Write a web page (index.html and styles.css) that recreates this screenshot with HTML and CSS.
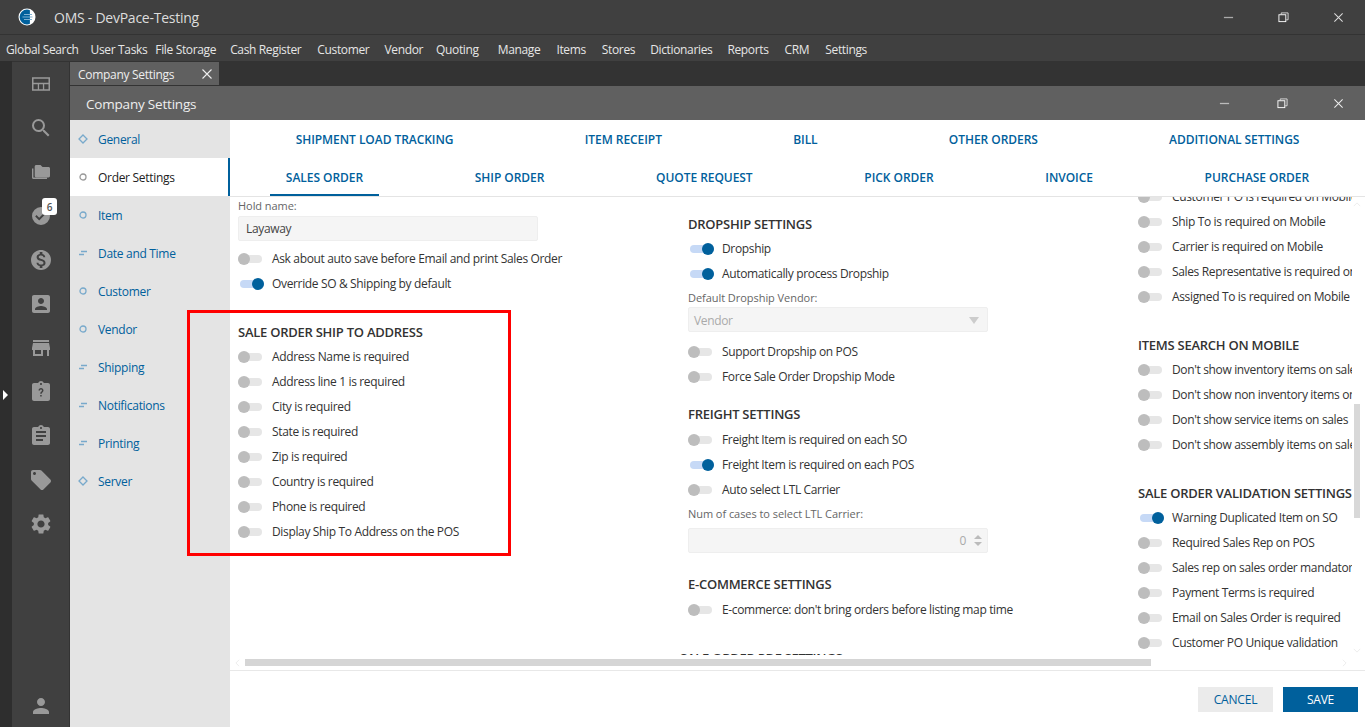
FILE: index.html
```html
<!DOCTYPE html>
<html lang="en">
<head>
<meta charset="utf-8">
<title>OMS - DevPace-Testing</title>
<link rel="stylesheet" href="styles.css">
</head>
<body>
<div class="app">
  <header class="titlebar">
    <svg class="logo" viewBox="0 0 18 18"><circle cx="9" cy="9" r="8.5" fill="#fff"/><path d="M9 1.6A7.4 7.4 0 0 0 9 16.4c1 0 2-.2 2.9-.6V2.2C11 1.8 10 1.6 9 1.6z" fill="#00609c"/><path d="M6 6.5h8M4.5 9h10M6 11.5h8" stroke="#7fb2d3" stroke-width="1.2"/></svg>
    <span class="apptitle">OMS - DevPace-Testing</span>
    <div class="winctl top">
      <svg viewBox="0 0 12 12"><path d="M1 6h10" stroke="#aaa" stroke-width="1.4"/></svg>
      <svg viewBox="0 0 12 12"><path d="M3.5 2.5V1h7.5v7.5H9" fill="none" stroke="#ddd"/><rect x="1" y="3" width="7.5" height="7.5" fill="none" stroke="#fff"/></svg>
      <svg viewBox="0 0 12 12"><path d="M1.5 1.5l9 9M10.5 1.5l-9 9" stroke="#ddd" stroke-width="1.1"/></svg>
    </div>
  </header>
  <nav class="menubar">
    <span>Global Search</span><span>User Tasks</span><span>File Storage</span><span>Cash Register</span><span>Customer</span><span>Vendor</span><span>Quoting</span><span>Manage</span><span>Items</span><span>Stores</span><span>Dictionaries</span><span>Reports</span><span>CRM</span><span>Settings</span>
  </nav>
  <div class="workspace">
    <div class="edge"><i class="edge-arrow"></i></div>
    <aside class="rail">
      <div class="rail-item"><svg viewBox="0 0 24 24"><path fill-rule="evenodd" d="M3 5.300h18v13.400H3zM4.500 6.800v4h15v-4zM4.500 12.300v4.900h4.300v-4.900zM10.100 12.300v4.900h3.800v-4.900zM15.200 12.300v4.900h4.300v-4.900z"/></svg></div>
      <div class="rail-item"><svg viewBox="0 0 24 24"><path d="M15.5 14h-.79l-.28-.27A6.47 6.47 0 0 0 16 9.5 6.5 6.5 0 1 0 9.5 16c1.61 0 3.09-.59 4.23-1.57l.27.28v.79l5 4.99L20.49 19l-4.99-5zm-6 0C7.01 14 5 11.99 5 9.5S7.01 5 9.5 5 14 7.01 14 9.5 11.99 14 9.5 14z"/></svg></div>
      <div class="rail-item"><svg viewBox="0 0 24 24"><path d="M19.500 7h-6l-2-2H7.300c-.9 0-1.600.7-1.600 1.600v9.200c0 .9.7 1.600 1.600 1.600h12.200c.9 0 1.500-.7 1.500-1.600V8.600c0-.9-.6-1.600-1.500-1.600z"/><path d="M3 8.500h1.400v9.100H18V19H4.500C3.700 19 3 18.300 3 17.500z"/></svg></div>
      <div class="rail-item"><svg viewBox="0 0 24 24"><path d="M12 3a9 9 0 1 0 0 18 9 9 0 0 0 0-18zm-1.800 13.400-4-4 1.300-1.300 2.700 2.700 6.300-6.300 1.300 1.300z"/></svg><span class="badge">6</span></div>
      <div class="rail-item"><svg viewBox="0 0 24 24"><path d="M12 2C6.48 2 2 6.48 2 12s4.48 10 10 10 10-4.48 10-10S17.52 2 12 2zm1.41 16.09V20h-2.67v-1.93c-1.71-.36-3.16-1.46-3.27-3.4h1.96c.1 1.05.82 1.87 2.65 1.87 1.96 0 2.4-.98 2.4-1.59 0-.83-.44-1.61-2.67-2.14-2.48-.6-4.18-1.62-4.18-3.67 0-1.72 1.39-2.84 3.11-3.21V4h2.67v1.95c1.86.45 2.79 1.86 2.85 3.39H14.3c-.05-1.11-.64-1.87-2.22-1.87-1.5 0-2.4.68-2.4 1.64 0 .84.65 1.39 2.67 1.91s4.18 1.39 4.18 3.91c-.01 1.83-1.38 2.83-3.12 3.16z"/></svg></div>
      <div class="rail-item"><svg viewBox="0 0 24 24"><path d="M3 5v14c0 1.100.89 2 2 2h14c1.100 0 2-.9 2-2V5c0-1.100-.9-2-2-2H5c-1.110 0-2 .9-2 2zm12 4c0 1.660-1.340 3-3 3s-3-1.340-3-3 1.340-3 3-3 3 1.340 3 3zm-9 8c0-2 4-3.100 6-3.100s6 1.100 6 3.100v1H6v-1z"/></svg></div>
      <div class="rail-item"><svg viewBox="0 0 24 24"><path d="M20 4H4v2h16V4zm1 10v-2l-1-5H4l-1 5v2h1v6h10v-6h4v6h2v-6h1zm-9 4H6v-4h6v4z"/></svg></div>
      <div class="rail-item"><svg viewBox="0 0 24 24"><path fill-rule="evenodd" d="M19 3h-4.180C14.400 1.840 13.300 1 12 1c-1.300 0-2.400.84-2.820 2H5c-1.100 0-2 .9-2 2v14c0 1.100.9 2 2 2h14c1.100 0 2-.9 2-2V5c0-1.100-.9-2-2-2zm-7 0c.55 0 1 .45 1 1s-.45 1-1 1-1-.45-1-1 .45-1 1-1z"/><path d="M9.500 10.500c0-1.400 1.100-2.500 2.500-2.500s2.500 1.100 2.500 2.400c0 1.800-1.800 1.800-1.800 3.300h-1.500c0-2.300 1.800-2.200 1.800-3.300 0-.5-.4-1-1-1s-1 .5-1 1.100zM11.200 15h1.500v1.600h-1.500z" fill="#404040"/></svg></div>
      <div class="rail-item"><svg viewBox="0 0 24 24"><path d="M19 3h-4.180C14.400 1.840 13.300 1 12 1c-1.300 0-2.400.84-2.820 2H5c-1.100 0-2 .9-2 2v14c0 1.100.9 2 2 2h14c1.100 0 2-.9 2-2V5c0-1.100-.9-2-2-2zm-7 0c.55 0 1 .45 1 1s-.45 1-1 1-1-.45-1-1 .45-1 1-1zm2 14H7v-2h7v2zm3-4H7v-2h10v2zm0-4H7V7h10v2z"/></svg></div>
      <div class="rail-item"><svg viewBox="0 0 24 24"><path d="M21.410 11.580l-9-9C12.050 2.220 11.550 2 11 2H4c-1.100 0-2 .9-2 2v7c0 .55.22 1.050.59 1.420l9 9c.36.36.86.58 1.410.58.55 0 1.050-.22 1.410-.59l7-7c.37-.36.59-.86.59-1.410 0-.55-.23-1.060-.59-1.420zM5.500 7C4.670 7 4 6.330 4 5.500S4.670 4 5.500 4 7 4.670 7 5.500 6.330 7 5.500 7z"/></svg></div>
      <div class="rail-item"><svg viewBox="0 0 24 24"><path d="M19.140 12.940c.04-.3.06-.61.06-.94 0-.32-.02-.64-.07-.94l2.030-1.580c.18-.14.23-.41.12-.61l-1.920-3.320c-.12-.22-.37-.29-.59-.22l-2.390.96c-.5-.38-1.030-.7-1.620-.94l-.36-2.540c-.04-.24-.24-.41-.48-.41h-3.840c-.24 0-.43.17-.47.41l-.36 2.540c-.59.24-1.130.57-1.620.94l-2.390-.96c-.22-.08-.47 0-.59.22L2.740 8.870c-.12.21-.08.47.12.61l2.030 1.580c-.05.3-.09.63-.09.94s.02.64.07.94l-2.030 1.580c-.18.14-.23.41-.12.61l1.920 3.320c.12.22.37.29.59.22l2.390-.96c.5.38 1.030.7 1.620.94l.36 2.540c.05.24.24.41.48.41h3.840c.24 0 .44-.17.47-.41l.36-2.540c.59-.24 1.130-.56 1.620-.94l2.390.96c.22.08.47 0 .59-.22l1.920-3.320c.12-.22.07-.47-.12-.61l-2.010-1.580zM12 15.600c-1.980 0-3.600-1.620-3.600-3.600s1.620-3.600 3.600-3.600 3.600 1.620 3.600 3.600-1.620 3.600-3.600 3.600z"/></svg></div>
      <div class="rail-item rail-user"><svg viewBox="0 0 24 24"><path d="M12 12c2.210 0 4-1.790 4-4s-1.790-4-4-4-4 1.790-4 4 1.790 4 4 4zm0 2c-2.670 0-8 1.340-8 4v2h16v-2c0-2.660-5.330-4-8-4z"/></svg></div>
    </aside>
    <section class="doc">
      <div class="doctabs"><div class="doctab"><span>Company Settings</span><svg viewBox="0 0 12 12"><path d="M1.500 1.500l9 9M10.500 1.500l-9 9" stroke="#eee" stroke-width="1.100"/></svg></div></div>
      <div class="dochead">
        <span>Company Settings</span>
        <div class="winctl inner">
          <svg viewBox="0 0 12 12"><path d="M1 6h10" stroke="#bbb" stroke-width="1.400"/></svg>
          <svg viewBox="0 0 12 12"><path d="M3.500 2.500V1h7.500v7.500H9" fill="none" stroke="#ddd"/><rect x="1" y="3" width="7.500" height="7.500" fill="none" stroke="#fff"/></svg>
          <svg viewBox="0 0 12 12"><path d="M1.500 1.500l9 9M10.500 1.500l-9 9" stroke="#eee" stroke-width="1.100"/></svg>
        </div>
      </div>
      <div class="docbody">
        <ul class="sidenav">
          <li><svg viewBox="0 0 10 10"><path d="M5 1l4 4-4 4-4-4z"/></svg>General</li>
          <li class="active"><svg viewBox="0 0 10 10"><circle cx="5" cy="5" r="3"/></svg>Order Settings</li>
          <li><svg viewBox="0 0 10 10"><circle cx="5" cy="5" r="3"/></svg>Item</li>
          <li><svg viewBox="0 0 10 10"><path d="M3 3.500h6M1 6.500h5"/></svg>Date and Time</li>
          <li><svg viewBox="0 0 10 10"><circle cx="5" cy="5" r="3"/></svg>Customer</li>
          <li><svg viewBox="0 0 10 10"><circle cx="5" cy="5" r="3"/></svg>Vendor</li>
          <li><svg viewBox="0 0 10 10"><path d="M3 3.500h6M1 6.500h5"/></svg>Shipping</li>
          <li><svg viewBox="0 0 10 10"><path d="M3 3.500h6M1 6.500h5"/></svg>Notifications</li>
          <li><svg viewBox="0 0 10 10"><path d="M3 3.500h6M1 6.500h5"/></svg>Printing</li>
          <li><svg viewBox="0 0 10 10"><path d="M5 1l4 4-4 4-4-4z"/></svg>Server</li>
        </ul>
        <main class="panel">
          <div class="tabs">
            <div class="tabrow"><a>SHIPMENT LOAD TRACKING</a><a>ITEM RECEIPT</a><a>BILL</a><a>OTHER ORDERS</a><a>ADDITIONAL SETTINGS</a></div>
            <div class="tabrow"><a class="current">SALES ORDER</a><a>SHIP ORDER</a><a>QUOTE REQUEST</a><a>PICK ORDER</a><a>INVOICE</a><a>PURCHASE ORDER</a></div>
          </div>
          <div class="scrollarea">
            <div class="viewport">
              <div class="col col-left">
                <label class="fieldlabel">Hold name:</label>
                <div class="input">Layaway</div>
                <div class="row first"><i class="tg"></i><span>Ask about auto save before Email and print Sales Order</span></div>
                <div class="row"><i class="tg on"></i><span>Override SO &amp; Shipping by default</span></div>
                <h3 class="section s-ship">SALE ORDER SHIP TO ADDRESS</h3>
                <div class="row"><i class="tg"></i><span>Address Name is required</span></div>
                <div class="row"><i class="tg"></i><span>Address line 1 is required</span></div>
                <div class="row"><i class="tg"></i><span>City is required</span></div>
                <div class="row"><i class="tg"></i><span>State is required</span></div>
                <div class="row"><i class="tg"></i><span>Zip is required</span></div>
                <div class="row"><i class="tg"></i><span>Country is required</span></div>
                <div class="row"><i class="tg"></i><span>Phone is required</span></div>
                <div class="row"><i class="tg"></i><span>Display Ship To Address on the POS</span></div>
              </div>
              <div class="col col-mid">
                <h3 class="section">DROPSHIP SETTINGS</h3>
                <div class="row"><i class="tg on"></i><span>Dropship</span></div>
                <div class="row"><i class="tg on"></i><span>Automatically process Dropship</span></div>
                <label class="fieldlabel tight">Default Dropship Vendor:</label>
                <div class="input disabled select">Vendor<i class="caret"></i></div>
                <div class="row first"><i class="tg"></i><span>Support Dropship on POS</span></div>
                <div class="row"><i class="tg"></i><span>Force Sale Order Dropship Mode</span></div>
                <h3 class="section s-freight">FREIGHT SETTINGS</h3>
                <div class="row"><i class="tg"></i><span>Freight Item is required on each SO</span></div>
                <div class="row"><i class="tg on"></i><span>Freight Item is required on each POS</span></div>
                <div class="row"><i class="tg"></i><span>Auto select LTL Carrier</span></div>
                <label class="fieldlabel spaced">Num of cases to select LTL Carrier:</label>
                <div class="input disabled number">0<span class="spin"><i></i><i></i></span></div>
                <h3 class="section s-ecom">E-COMMERCE SETTINGS</h3>
                <div class="row"><i class="tg"></i><span>E-commerce: don't bring orders before listing map time</span></div>
                <h3 class="section s-pdf">SALE ORDER PDF SETTINGS</h3>
              </div>
              <div class="col col-right">
                <div class="row"><i class="tg"></i><span>Customer PO is required on Mobile</span></div>
                <div class="row"><i class="tg"></i><span>Ship To is required on Mobile</span></div>
                <div class="row"><i class="tg"></i><span>Carrier is required on Mobile</span></div>
                <div class="row"><i class="tg"></i><span>Sales Representative is required on Mobile</span></div>
                <div class="row"><i class="tg"></i><span>Assigned To is required on Mobile</span></div>
                <h3 class="section s-items">ITEMS SEARCH ON MOBILE</h3>
                <div class="row"><i class="tg"></i><span>Don't show inventory items on sales</span></div>
                <div class="row"><i class="tg"></i><span>Don't show non inventory items on sales</span></div>
                <div class="row"><i class="tg"></i><span>Don't show service items on sales</span></div>
                <div class="row"><i class="tg"></i><span>Don't show assembly items on sales</span></div>
                <h3 class="section s-items">SALE ORDER VALIDATION SETTINGS</h3>
                <div class="row"><i class="tg on"></i><span>Warning Duplicated Item on SO</span></div>
                <div class="row"><i class="tg"></i><span>Required Sales Rep on POS</span></div>
                <div class="row"><i class="tg"></i><span>Sales rep on sales order mandatory</span></div>
                <div class="row"><i class="tg"></i><span>Payment Terms is required</span></div>
                <div class="row"><i class="tg"></i><span>Email on Sales Order is required</span></div>
                <div class="row"><i class="tg"></i><span>Customer PO Unique validation</span></div>
              </div>
            </div>
            <div class="vbar">
              <svg class="sb-up" viewBox="0 0 10 6"><path d="M1 5l4-4 4 4" fill="none" stroke="#e8e8e8"/></svg>
              <i class="vthumb"></i>
              <svg class="sb-down" viewBox="0 0 10 6"><path d="M1 1l4 4 4-4" fill="none" stroke="#e8e8e8"/></svg>
            </div>
            <div class="hbar">
              <svg class="sb-left" viewBox="0 0 6 10"><path d="M5 1L1 5l4 4" fill="none" stroke="#e8e8e8"/></svg>
              <i class="hthumb"></i>
              <svg class="sb-right" viewBox="0 0 6 10"><path d="M1 1l4 4-4 4" fill="none" stroke="#e8e8e8"/></svg>
            </div>
          </div>
          <footer class="actions">
            <button class="btn cancel">CANCEL</button>
            <button class="btn save">SAVE</button>
          </footer>
          <div class="highlight"></div>
        </main>
      </div>
    </section>
  </div>
</div>
</body>
</html>
```
FILE: styles.css
```css
* { box-sizing: border-box; }
html, body { margin: 0; height: 100%; overflow: hidden; }
body { font-family: "Open Sans", "Noto Sans", sans-serif; font-size: 12px; color: #333; letter-spacing: -0.35px; }
i { display: block; }
.app { width: 1365px; height: 727px; display: flex; flex-direction: column; background: #333; }

.titlebar { height: 35px; flex: none; display: flex; align-items: center; background: #404040; border-bottom: 1px solid #333; padding-left: 18px; color: #ddd; }
.logo { width: 18px; height: 18px; flex: none; }
.apptitle { margin-left: 18px; font-size: 14px; letter-spacing: -0.25px; }
.winctl { margin-left: auto; display: flex; }
.winctl svg { width: 11px; height: 11px; }
.winctl.top { gap: 44px; padding-right: 21px; }
.winctl.inner { gap: 47px; padding-right: 21px; }
.winctl.inner svg:last-child { margin-left: -2px; }

.menubar { height: 26px; flex: none; display: flex; align-items: center; gap: 16px; padding: 3px 0 0 6px; background: #404040; color: #e6e6e6; letter-spacing: -0.35px; }
.menubar span:nth-child(1) { margin-right: -4px; }
.menubar span:nth-child(2) { margin-right: -8px; }
.menubar span:nth-child(3) { margin-right: -2px; }
.menubar span:nth-child(5) { margin-right: -1px; }
.menubar span:nth-child(6) { margin-right: -3px; }
.menubar span:nth-child(7) { margin-right: 3px; }
.menubar span:nth-child(10), .menubar span:nth-child(11) { margin-right: -1px; }

.workspace { flex: 1; min-height: 0; display: flex; }
.edge { width: 12px; flex: none; background: #2e2e2e; display: flex; align-items: center; padding-left: 3px; padding-top: 0; }
.edge-arrow { width: 0; height: 0; margin-top: 2px; border-left: 5px solid #fff; border-top: 5px solid transparent; border-bottom: 5px solid transparent; }
.rail { width: 58px; flex: none; background: #404040; border-right: 1px solid #333; margin-top: 1px; display: flex; flex-direction: column; }
.rail-item { height: 44px; flex: none; display: flex; align-items: center; justify-content: center; position: relative; }
.rail-item svg { width: 24px; height: 24px; fill: #999; }
.rail-user { margin-top: auto; margin-bottom: -1px; }
.badge { position: absolute; left: 30px; top: 4px; width: 15px; height: 17px; border-radius: 3px; background: #fff; color: #555; font-size: 10px; font-weight: 600; display: flex; align-items: center; justify-content: center; letter-spacing: 0; }

.doc { flex: 1; min-width: 0; display: flex; flex-direction: column; }
.doctabs { height: 25px; flex: none; padding-top: 1px; }
.doctab { width: 149px; height: 23px; background: #606060; color: #eee; display: flex; align-items: center; justify-content: space-between; padding: 1px 6px 0 8px; letter-spacing: -0.3px; }
.doctab svg { width: 12px; height: 12px; }
.dochead { height: 34px; flex: none; background: #606060; color: #eee; display: flex; align-items: center; padding: 1px 0 0 16px; font-size: 13.5px; letter-spacing: -0.2px; }

.docbody { flex: 1; min-height: 0; display: flex; }
.sidenav { width: 160px; flex: none; margin: 0; padding: 0 0; list-style: none; background: #e4e4e4; }
.sidenav li { height: 38px; display: flex; align-items: center; gap: 10px; padding-left: 8px; color: #00609c; letter-spacing: -0.3px; }
.sidenav li svg { width: 10px; height: 10px; fill: none; stroke: #78a9cb; stroke-width: 1.300; flex: none; }
.sidenav li.active { background: #fff; color: #222; border-right: 2px solid #00609c; }
.sidenav li.active svg { stroke: #999; }

.panel { flex: 1; min-width: 0; display: flex; flex-direction: column; background: #fff; position: relative; }
.tabs { height: 77px; flex: none; border-bottom: 1px solid #e4e4e4; }
.tabrow { height: 38px; display: flex; justify-content: space-around; }
.tabrow a { padding: 0 16px; display: flex; align-items: center; color: #00609c; font-weight: 600; letter-spacing: -0.05px; }
.tabrow a.current { box-shadow: inset 0 -2px 0 #00609c; }

.scrollarea { flex: 1; min-height: 0; display: grid; grid-template-columns: 1fr 13px; grid-template-rows: 1fr 15px; }
.viewport { overflow: hidden; display: flex; gap: 150px; padding-left: 8px; }
.col { width: 300px; flex: none; }
.col-mid { padding-top: 14px; }
.col-right { margin-top: -13px; }

.row { height: 25px; display: flex; align-items: center; gap: 10px; white-space: nowrap; color: #333; }
.row.first { margin-top: 5px; }
.col-mid .row.first { margin-top: 7px; }
.tg { width: 24px; height: 8px; border-radius: 4px; background: #e6e6e6; position: relative; flex: none; }
.tg::after { content: ""; position: absolute; left: 0; top: -2px; width: 12px; height: 12px; border-radius: 50%; background: #bdbdbd; }
.tg.on { background: #c6d9f6; margin-left: 2px; margin-right: -2px; }
.tg.on::after { left: 12px; background: #00609c; }

.section { margin: 0; font-size: 13px; font-weight: 600; color: #333; height: 25px; display: flex; align-items: center; white-space: nowrap; letter-spacing: -0.25px; }
.s-ship { margin-top: 23px; }
.s-freight { margin-top: 12px; margin-bottom: 1px; }
.s-ecom { margin-top: 18px; margin-bottom: 1px; }
.s-pdf { margin-top: 23px; margin-left: -8px; }
.s-items { margin-top: 23px; }

.fieldlabel { display: block; height: 16px; line-height: 16px; color: #666; font-size: 11px; margin-top: 1px; letter-spacing: -0.05px; }
.fieldlabel.tight { margin-top: 4px; }
.fieldlabel.spaced { margin-top: 4px; margin-bottom: 6px; }
.input { width: 300px; height: 25px; margin-top: 2px; background: #f5f5f5; border: 1px solid #eee; border-radius: 2px; padding: 0 7px; display: flex; align-items: center; color: #444; position: relative; }
.tight + .input { margin-top: 1px; padding-left: 5px; padding-top: 1px; }
.spaced + .input { margin-top: 0; }
.input.disabled { color: #aaa; }
.caret { margin-left: auto; margin-right: 1px; border-top: 7px solid #ccc; border-left: 5px solid transparent; border-right: 5px solid transparent; }
.number { justify-content: flex-end; padding-right: 5px; }
.spin { margin-left: 8px; display: flex; flex-direction: column; gap: 3px; }
.spin i { border-left: 4px solid transparent; border-right: 4px solid transparent; }
.spin i:first-child { border-bottom: 4px solid #bbb; }
.spin i:last-child { border-top: 4px solid #bbb; }

.vbar { grid-column: 2; grid-row: 1 / span 2; display: flex; flex-direction: column; align-items: center; padding: 5px 3px 17px 0; }
.vthumb { width: 6px; height: 114px; margin-top: 197px; background: #d8d8d8; }
.sb-up, .sb-down { width: 8px; height: 5px; flex: none; }
.sb-down { margin-top: auto; }
.hbar { grid-column: 1; grid-row: 2; display: flex; align-items: center; padding: 0 5px; }
.hbar svg { width: 5px; height: 8px; flex: none; }
.hthumb { width: 906px; height: 7px; margin-left: 5px; background: #d5d5d5; }
.sb-right { margin-left: auto; }

.actions { height: 57px; flex: none; border-top: 1px solid #e8e8e8; display: flex; justify-content: flex-end; gap: 10px; padding: 16px 7px 0 0; }
.btn { width: 75px; height: 25px; border: 0; padding: 0; font: inherit; letter-spacing: -0.2px; }
.cancel { background: #ebebeb; color: #00609c; }
.save { background: #00609c; color: #fff; }

.highlight { position: absolute; left: -43px; top: 190px; width: 324px; height: 246px; border: 3px solid #f00; pointer-events: none; }
```
